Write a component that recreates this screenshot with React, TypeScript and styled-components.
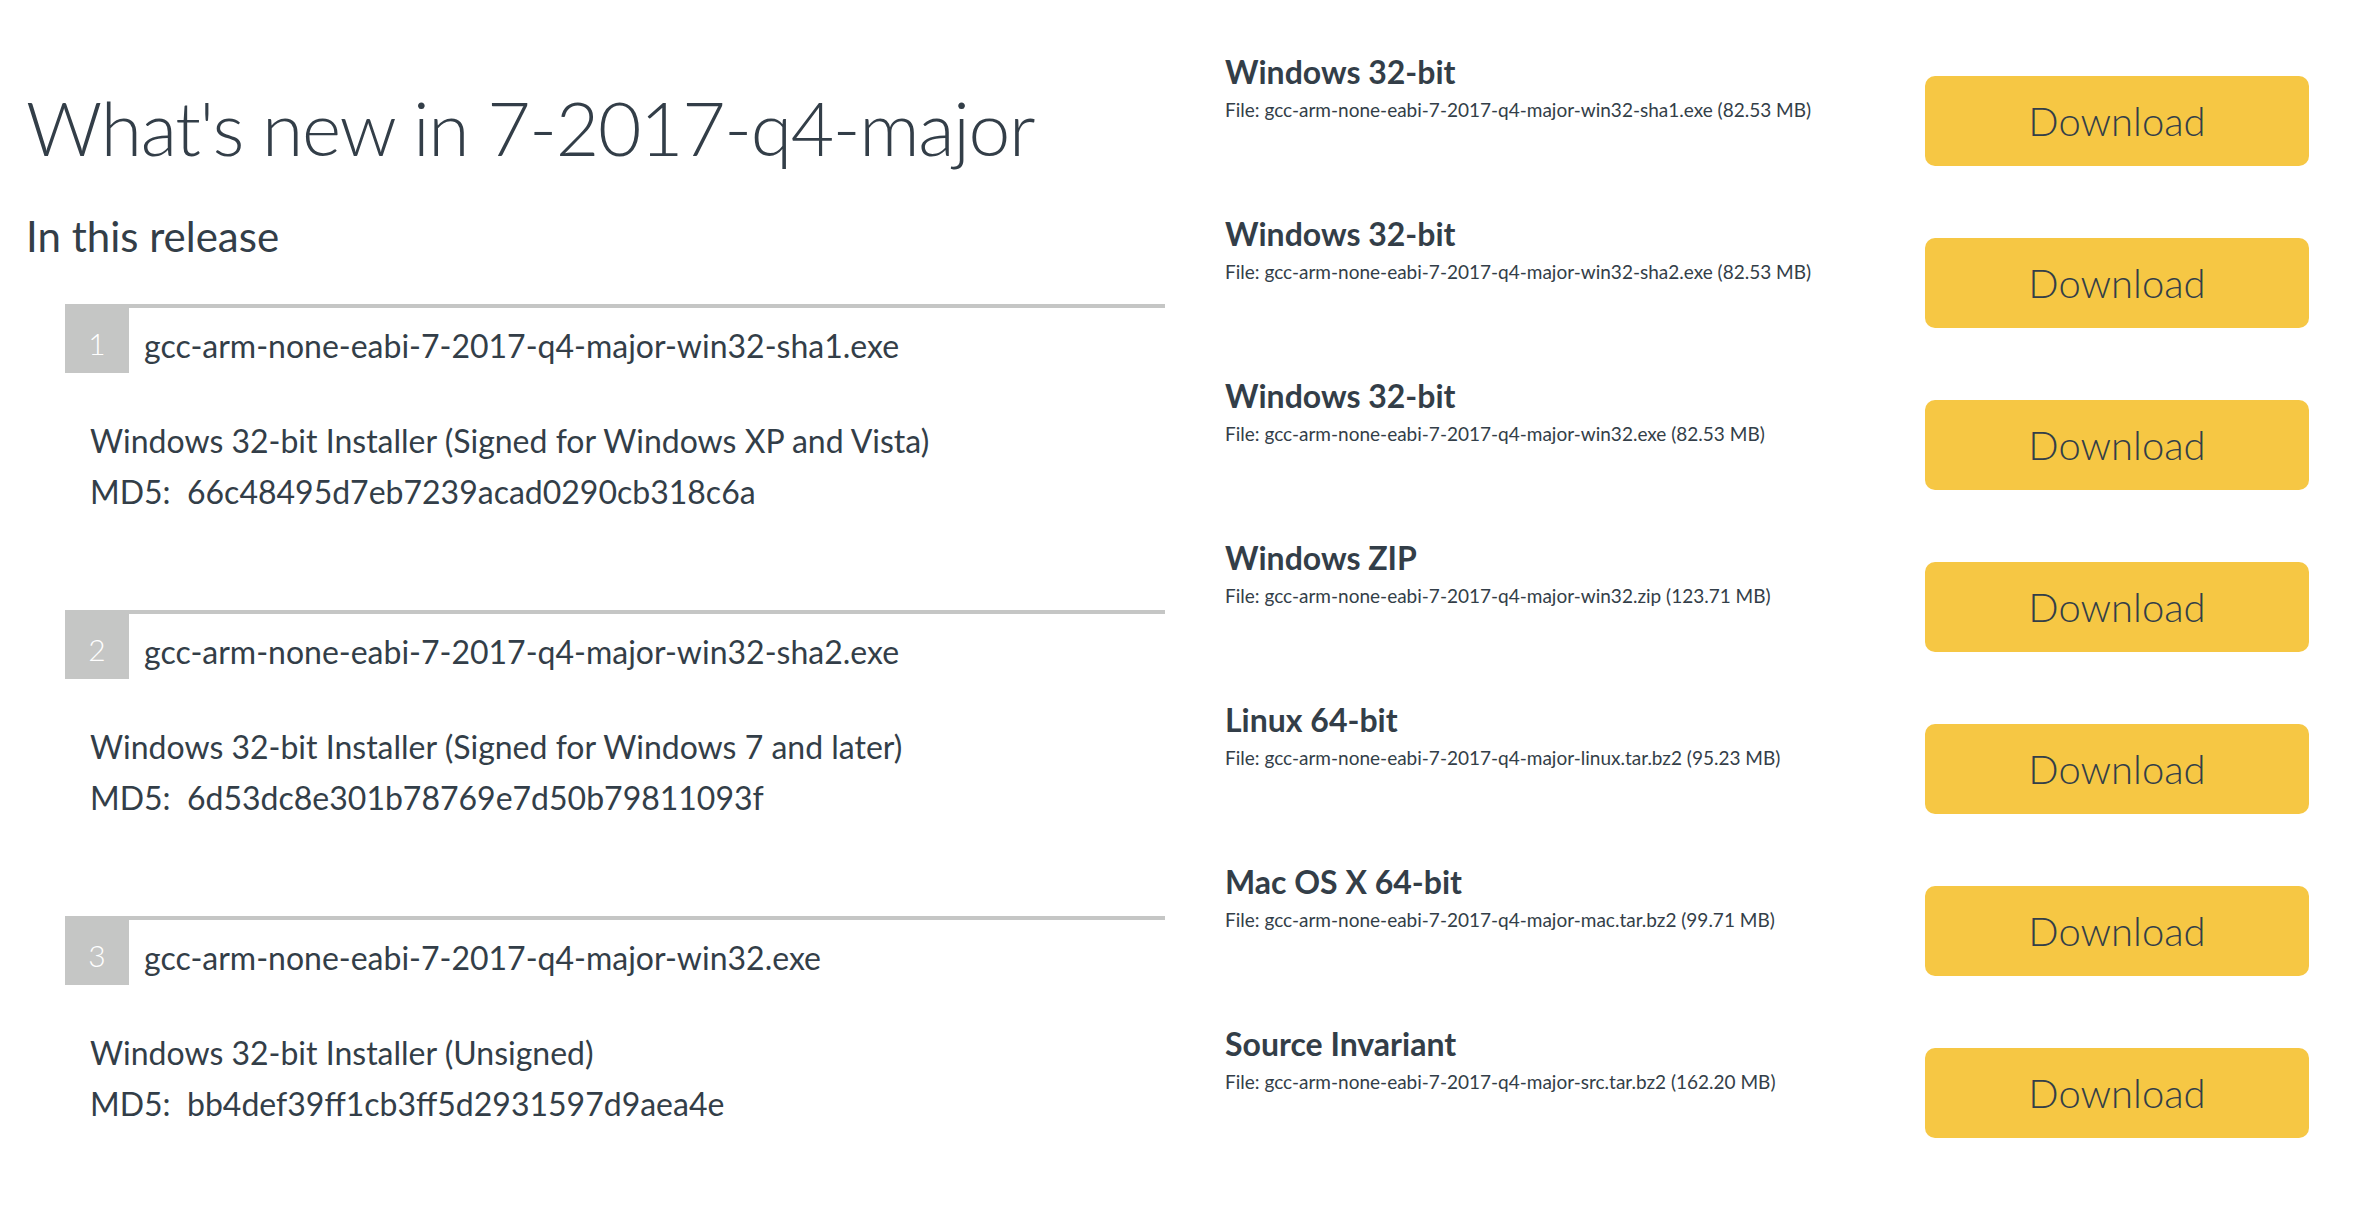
import React from "react";
import styled, { createGlobalStyle } from "styled-components";

const GlobalStyle = createGlobalStyle`
  html, body {
    margin: 0;
    padding: 0;
    background: #ffffff;
  }
  body {
    font-family: Lato, "Open Sans", "Liberation Sans", sans-serif;
    color: #333e48;
  }
  * { box-sizing: border-box; }
`;

const Page = styled.div`
  display: flex;
  align-items: flex-start;
  gap: 60px;
  padding: 0 54px 0 26px;
  width: 2363px;
  height: 1220px;
  overflow: hidden;
`;

const LeftColumn = styled.section`
  width: 1139px;
  flex: none;
  padding-top: 82px;
`;

const Title = styled.h1`
  margin: 0;
  font-size: 75px;
  line-height: 90px;
  font-weight: 300;
  letter-spacing: -1.35px;
  color: #333e48;
  white-space: nowrap;
`;

const SubTitle = styled.h2`
  margin: 40px 0 0;
  font-size: 42px;
  line-height: 48px;
  font-weight: 400;
  color: #333e48;
`;

const ReleaseList = styled.ol`
  list-style: none;
  margin: 44px 0 0 39px;
  padding: 0;
  display: flex;
  flex-direction: column;
  gap: 93px;
`;

const ReleaseItem = styled.li`
  display: flex;
  flex-direction: column;
`;

const ItemHeader = styled.div`
  display: flex;
  align-items: stretch;
  border-top: 4px solid #c5c6c5;
  height: 69px;
`;

const ItemNumber = styled.span`
  width: 64px;
  flex: none;
  background: #c5c6c5;
  color: #ffffff;
  font-size: 30px;
  font-weight: 300;
  display: flex;
  align-items: center;
  justify-content: center;
  padding-top: 5px;
`;

const ItemName = styled.span`
  margin: 19px 0 0 15px;
  font-size: 32px;
  line-height: 38px;
  font-weight: 400;
  white-space: nowrap;
`;

const ItemBody = styled.div`
  margin-top: 42px;
  padding-left: 25px;
  font-size: 32px;
  line-height: 51px;
  font-weight: 400;
  white-space: nowrap;
`;

const RightColumn = styled.section`
  flex: 1;
  padding-top: 54px;
  display: flex;
  flex-direction: column;
`;

const DownloadRow = styled.div`
  height: 162px;
  display: flex;
  justify-content: space-between;
  align-items: flex-start;
`;

const DownloadInfo = styled.div`
  display: flex;
  flex-direction: column;
`;

const PlatformName = styled.h3`
  margin: 0;
  font-size: 32px;
  line-height: 36px;
  font-weight: 700;
  color: #333e48;
`;

const FileName = styled.div`
  margin-top: 9px;
  font-size: 19px;
  line-height: 22px;
  font-weight: 400;
  white-space: nowrap;
`;

const DownloadButton = styled.button`
  margin-top: 22px;
  width: 384px;
  height: 90px;
  flex: none;
  border: none;
  border-radius: 10px;
  background: #f6c744;
  color: #333e48;
  font-family: Lato, "Open Sans", "Liberation Sans", sans-serif;
  font-size: 40px;
  line-height: 90px;
  font-weight: 300;
  padding: 0;
  cursor: pointer;
`;

const releases = [
  {
    name: "gcc-arm-none-eabi-7-2017-q4-major-win32-sha1.exe",
    desc: "Windows 32-bit Installer (Signed for Windows XP and Vista)",
    md5: "66c48495d7eb7239acad0290cb318c6a",
  },
  {
    name: "gcc-arm-none-eabi-7-2017-q4-major-win32-sha2.exe",
    desc: "Windows 32-bit Installer (Signed for Windows 7 and later)",
    md5: "6d53dc8e301b78769e7d50b79811093f",
  },
  {
    name: "gcc-arm-none-eabi-7-2017-q4-major-win32.exe",
    desc: "Windows 32-bit Installer (Unsigned)",
    md5: "bb4def39ff1cb3ff5d2931597d9aea4e",
  },
];

const downloads = [
  { platform: "Windows 32-bit", file: "gcc-arm-none-eabi-7-2017-q4-major-win32-sha1.exe (82.53 MB)" },
  { platform: "Windows 32-bit", file: "gcc-arm-none-eabi-7-2017-q4-major-win32-sha2.exe (82.53 MB)" },
  { platform: "Windows 32-bit", file: "gcc-arm-none-eabi-7-2017-q4-major-win32.exe (82.53 MB)" },
  { platform: "Windows ZIP", file: "gcc-arm-none-eabi-7-2017-q4-major-win32.zip (123.71 MB)" },
  { platform: "Linux 64-bit", file: "gcc-arm-none-eabi-7-2017-q4-major-linux.tar.bz2 (95.23 MB)" },
  { platform: "Mac OS X 64-bit", file: "gcc-arm-none-eabi-7-2017-q4-major-mac.tar.bz2 (99.71 MB)" },
  { platform: "Source Invariant", file: "gcc-arm-none-eabi-7-2017-q4-major-src.tar.bz2 (162.20 MB)" },
];

export default function App() {
  return (
    <>
      <GlobalStyle />
      <Page>
        <LeftColumn>
          <Title>What's new in 7-2017-q4-major</Title>
          <SubTitle>In this release</SubTitle>
          <ReleaseList>
            {releases.map((r, i) => (
              <ReleaseItem key={r.name}>
                <ItemHeader>
                  <ItemNumber>{i + 1}</ItemNumber>
                  <ItemName>{r.name}</ItemName>
                </ItemHeader>
                <ItemBody>
                  <div>{r.desc}</div>
                  <div>MD5:&nbsp; {r.md5}</div>
                </ItemBody>
              </ReleaseItem>
            ))}
          </ReleaseList>
        </LeftColumn>
        <RightColumn>
          {downloads.map((d) => (
            <DownloadRow key={d.file}>
              <DownloadInfo>
                <PlatformName>{d.platform}</PlatformName>
                <FileName>File: {d.file}</FileName>
              </DownloadInfo>
              <DownloadButton>Download</DownloadButton>
            </DownloadRow>
          ))}
        </RightColumn>
      </Page>
    </>
  );
}
